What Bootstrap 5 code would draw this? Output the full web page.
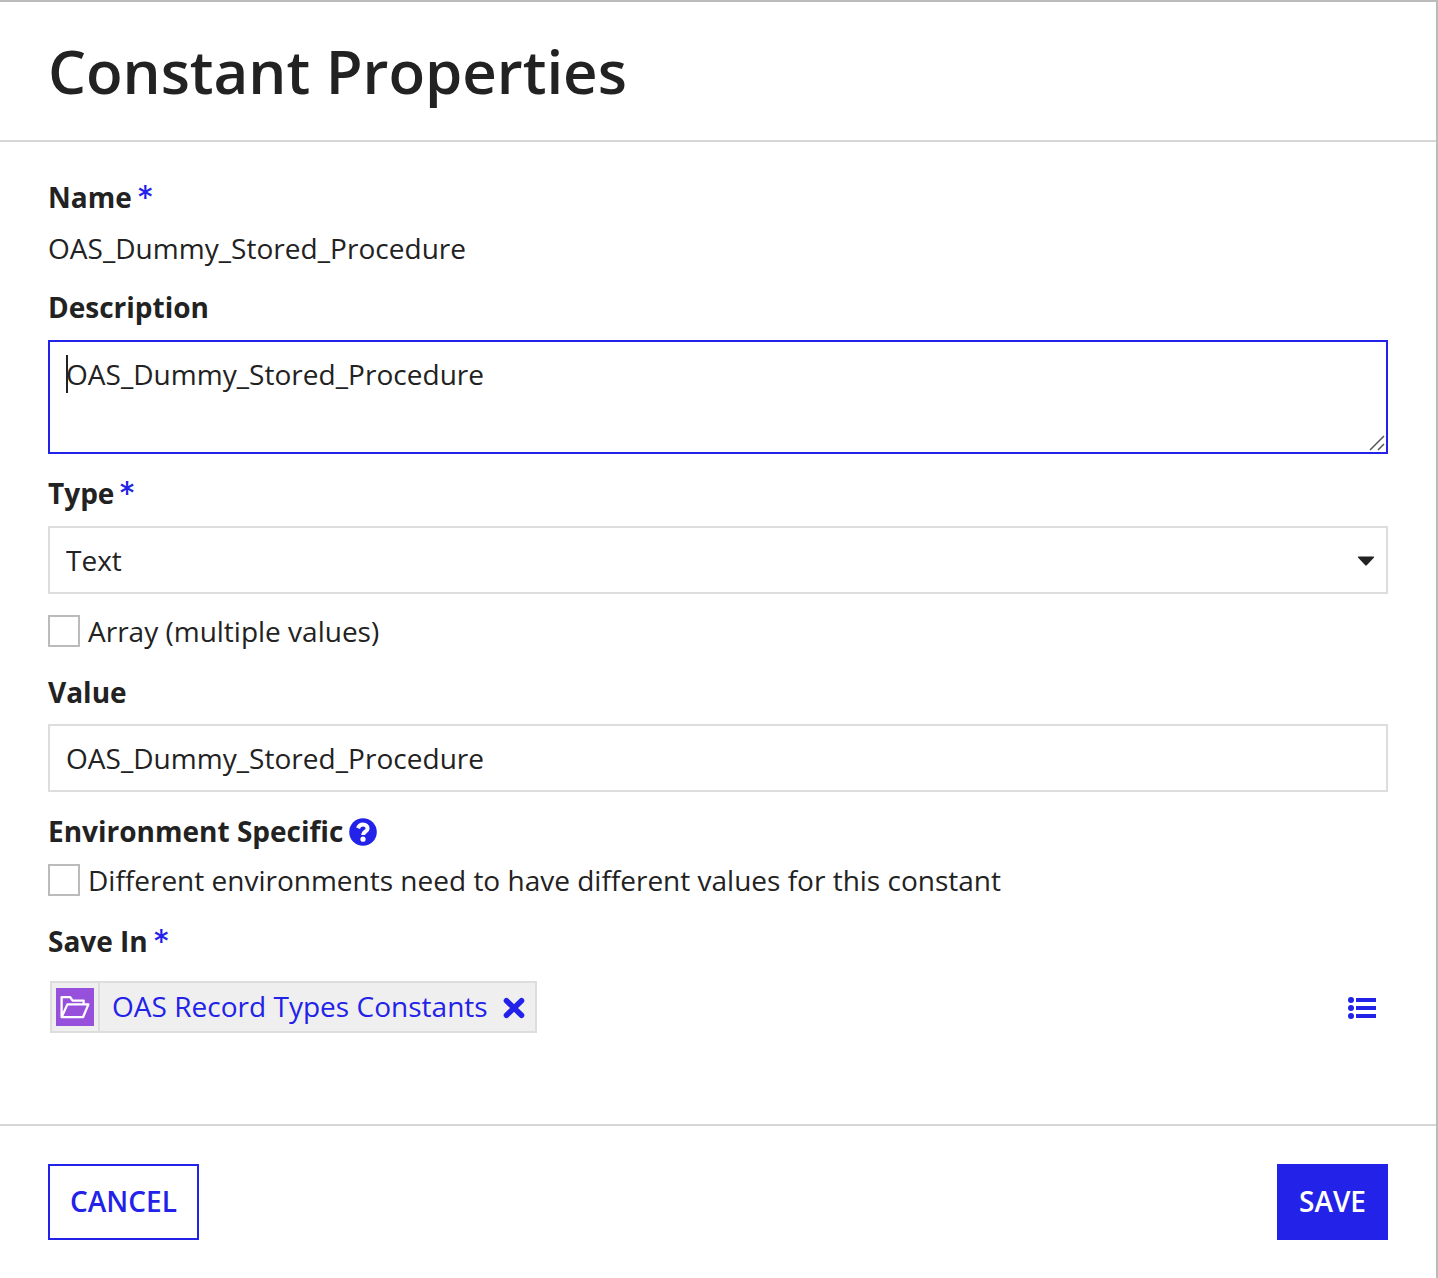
<!DOCTYPE html>
<html lang="en">
<head>
<meta charset="utf-8">
<meta name="viewport" content="width=device-width, initial-scale=1">
<title>Constant Properties</title>
<link href="https://cdn.jsdelivr.net/npm/bootstrap@5.3.0/dist/css/bootstrap.min.css" rel="stylesheet">
<style>
:root { --accent: #2322e8; --ink: #222; }
body { font-family: "Open Sans", "Noto Sans", sans-serif; font-size: 28px; line-height: 38px; color: var(--ink); background: #fff; overflow: hidden; }
.dialog-frame { height: 1278px; border-top: 2px solid #bbb; border-right: 2px solid #bbb; }
.dialog-head { height: 140px; padding: 0 48px; border-bottom: 2px solid #d6d6d6; }
.dialog-head h1 { font-size: 60px; font-weight: 600; line-height: 82px; padding-top: 28px; margin: 0; letter-spacing: -.03px; }
.dialog-main { padding: 36px 48px 0; }
.dialog-foot { height: 154px; border-top: 2px solid #d6d6d6; padding: 38px 48px 0; }
.field-title { display: block; font-weight: 700; height: 38px; margin-bottom: 14px; }
.req { font-family: Inter, "Open Sans", sans-serif; font-size: 34px; color: var(--accent); font-weight: 400; margin-left: 5px; display: inline-block; line-height: 30px; vertical-align: -2px; }
.req-tight { margin-left: 4px; }
.const-name { letter-spacing: .035px; }
.name-group { margin-bottom: 21px; }
.name-group .field-title { margin-bottom: 13px; }
.desc-group, .value-group { margin-bottom: 20px; }
.type-group { margin-bottom: 18px; }
.value-group .field-title { margin-bottom: 13px; }
.array-group, .env-group { margin-bottom: 23px; }
.env-group .field-title { margin-bottom: 11px; }
.save-group .field-title { margin-bottom: 21px; }
.form-control, .form-select { font-size: 28px; line-height: 38px; color: var(--ink); border: 2px solid #ddd; border-radius: 0; padding: 13px 16px; height: 68px; background-image: none; }
.form-control.active-area { height: 114px; border-color: var(--accent); resize: none; overflow: hidden; }
.caret-line { position: absolute; left: 18px; top: 15px; width: 2px; height: 38px; background: #222; }
.grip { position: absolute; right: 2px; bottom: 2px; }
.select-arrow { position: absolute; right: 13px; top: 30px; pointer-events: none; }
.form-check-input.sq { width: 32px; height: 32px; margin: 3px 0 0; border: 2px solid #bbb; border-radius: 0; flex: none; }
.help-icon { margin: 2px 0 0 6px; }
.picker-token { height: 52px; border: 2px solid #ddd; background: #efefef; margin-left: 2px; }
.token-icon { width: 48px; height: 48px; border-right: 2px solid #ddd; padding: 5px 4px; }
.token-name { color: var(--accent); padding: 4px 0 0 12px; text-decoration: none; letter-spacing: .02px; }
.plain-btn { background: none; border: 0; padding: 0; line-height: 0; }
.token-remove { margin: 1px 10px 0 15.5px; }
.browse-btn { margin: 2px 12px 0 0; }
.btn.act { font-size: 28px; line-height: 38px; font-weight: 600; border: 2px solid var(--accent); border-radius: 0; height: 76px; padding: 0 0 2px; }
.btn.act-cancel { width: 151px; color: var(--accent); background: #fff; }
.btn.act-save { width: 111px; color: #fff; background: var(--accent); }
</style>
<script src="https://cdn.jsdelivr.net/npm/bootstrap@5.3.0/dist/js/bootstrap.bundle.min.js"></script>
</head>
<body>
<div class="dialog-frame d-flex flex-column">
  <header class="dialog-head"><h1>Constant Properties</h1></header>
  <main class="dialog-main flex-grow-1">
    <div class="name-group">
      <span class="field-title">Name<span class="req">*</span></span>
      <div class="const-name">OAS_Dummy_Stored_Procedure</div>
    </div>
    <div class="desc-group">
      <label class="field-title" for="desc">Description</label>
      <div class="position-relative">
        <textarea class="form-control active-area const-name d-block" id="desc" spellcheck="false">OAS_Dummy_Stored_Procedure</textarea>
        <span class="caret-line"></span>
        <svg class="grip" width="18" height="18" viewBox="0 0 18 18" fill="none" stroke="#555" stroke-width="1.5"><path d="M2 16 16 2M10 16 16 10"/></svg>
      </div>
    </div>
    <div class="type-group">
      <label class="field-title" for="type">Type<span class="req req-tight">*</span></label>
      <div class="position-relative">
        <select class="form-select" id="type"><option>Text</option></select>
        <svg class="select-arrow" width="18" height="10" viewBox="0 0 18 10"><path d="M1.5 .4H16.5Q17.7.8 16.8 1.8L10 9Q9 10 8 9L1.2 1.8Q.3.8 1.5 .4Z" fill="#222"/></svg>
      </div>
    </div>
    <div class="array-group d-flex">
      <input class="form-check-input sq" type="checkbox" id="arr">
      <label for="arr" class="ps-2">Array (multiple values)</label>
    </div>
    <div class="value-group">
      <label class="field-title" for="val">Value</label>
      <input class="form-control const-name" id="val" value="OAS_Dummy_Stored_Procedure" spellcheck="false">
    </div>
    <div class="env-group">
      <div class="field-title d-flex align-items-center">Environment Specific
        <svg class="help-icon" width="28" height="28" viewBox="0 0 28 28"><circle cx="14" cy="14" r="13.8" fill="#2322e8"/><path d="M9 10.2C10 7.6 11.7 6.6 14 6.6C17 6.6 18.6 8.3 18.6 10.4C18.6 13.7 14.1 13.3 14.1 17" fill="none" stroke="#fff" stroke-width="4"/><circle cx="14" cy="21.2" r="2.6" fill="#fff"/></svg>
      </div>
      <div class="d-flex">
        <input class="form-check-input sq" type="checkbox" id="env">
        <label for="env" class="ps-2">Different environments need to have different values for this constant</label>
      </div>
    </div>
    <div class="save-group">
      <span class="field-title">Save In<span class="req">*</span></span>
      <div class="d-flex justify-content-between align-items-center">
        <div class="picker-token d-flex">
          <div class="token-icon">
            <svg class="d-block" width="38" height="38" viewBox="0 0 38 38"><path fill="#9650dc" d="M0 0H38V38H0z"/><path d="M5.6 29.2V9.2H14.2L16.6 12.6H27.6V16.2M5.6 29.2L11.4 16.4H32.4L27 29.2Z" fill="none" stroke="#fff" stroke-width="2.3" stroke-linejoin="round"/></svg>
          </div>
          <a class="token-name d-block" href="#">OAS Record Types Constants</a>
          <button class="plain-btn token-remove" type="button" aria-label="Remove"><svg width="22" height="22" viewBox="0 0 22 22"><path d="M3.5 3.8 18.5 18.2M18.5 3.8 3.5 18.2" stroke="#2322e8" stroke-width="5.6" stroke-linecap="round"/></svg></button>
        </div>
        <button class="plain-btn browse-btn" type="button" aria-label="Browse"><svg width="28" height="22" viewBox="0 0 28 22" fill="#2322e8"><circle cx="3" cy="3" r="3"/><circle cx="3" cy="11" r="3"/><circle cx="3" cy="19" r="3"/><path d="M8 1H28V5H8zM8 9H28V13H8zM8 17H28V21H8z"/></svg></button>
      </div>
    </div>
  </main>
  <footer class="dialog-foot d-flex justify-content-between align-items-start">
    <button class="btn act act-cancel" type="button">CANCEL</button>
    <button class="btn act act-save" type="button">SAVE</button>
  </footer>
</div>
</body>
</html>
